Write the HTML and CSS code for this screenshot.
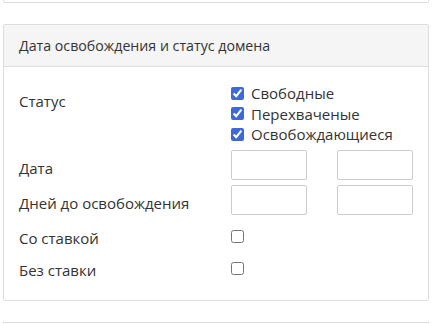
FILE: index.html
```html
<html>
    <head>
        <title>Фильтр доменов</title>
        <link rel="stylesheet" href="styles.css">
    </head>
    <body>

        <div class="page">
            <div class="panel panel-top"></div>

            <div class="panel">
                <div class="panel-heading">Дата освобождения и статус домена</div>
                <div class="panel-body">

                    <!-- Статус -->
                    <div class="form-row status-row">
                        <div class="label">Статус</div>
                        <div class="checks">
                            <label class="check"><input type="checkbox" checked> Свободные</label>
                            <label class="check"><input type="checkbox" checked> Перехваченые</label>
                            <label class="check"><input type="checkbox" checked> Освобождающиеся</label>
                        </div>
                    </div>

                    <!-- Дата -->
                    <div class="form-row">
                        <div class="label">Дата</div>
                        <div class="range">
                            <input type="text" class="field">
                            <input type="text" class="field">
                        </div>
                    </div>

                    <!-- Дней до освобождения -->
                    <div class="form-row">
                        <div class="label">Дней до освобождения</div>
                        <div class="range">
                            <input type="text" class="field">
                            <input type="text" class="field">
                        </div>
                    </div>

                    <div class="form-row flag-row">
                        <div class="label">Со ставкой</div>
                        <div><input type="checkbox" class="flag"></div>
                    </div>

                    <div class="form-row flag-row">
                        <div class="label">Без ставки</div>
                        <div><input type="checkbox" class="flag"></div>
                    </div>

                </div>
            </div>

            <div class="panel panel-bottom"></div>
        </div>

    </body>
</html>
```

FILE: styles.css
```css
/* Basic Reset */
* {
    margin: 0;
    padding: 0;
    box-sizing: border-box;
}

body {
    font-family: "Open Sans", "Noto Sans", sans-serif;
    font-size: 15px;
    line-height: 20px;
    color: #333;
    background-color: #fff;
    overflow: hidden;
}

.page {
    width: 426px;
    margin-left: 3px;
}

.panel {
    background-color: #fff;
    border: 1px solid #ddd;
    border-radius: 2px;
    margin-bottom: 21px;
}

.panel-top {
    height: 3px;
    border-top: none;
    border-radius: 0 0 2px 2px;
}

.panel-bottom {
    height: 2px;
    margin-bottom: 0;
    border-bottom: none;
}

.panel-heading {
    background-color: #f5f5f5;
    border-bottom: 1px solid #ddd;
    padding: 11px 15px 10px;
    font-size: 14.2px;
}

.panel-body {
    padding: 16px 15px 21px;
}

.form-row {
    display: grid;
    grid-template-columns: 212px 1fr;
    margin-bottom: 5px;
}

.form-row:last-child {
    margin-bottom: 0;
}

.label {
    padding-top: 8px;
}

.status-row {
    margin-bottom: 5.5px;
}

.check {
    display: flex;
    align-items: center;
    gap: 7px;
    height: 20.5px;
}

input[type="checkbox"] {
    width: 13px;
    height: 13px;
    margin: 0;
    accent-color: #3d6ad8;
}

.range {
    display: flex;
    gap: 30px;
}

.field {
    width: 76px;
    height: 30px;
    border: 1px solid #ccc;
    border-radius: 2px;
    background-color: #fff;
}

.flag-row {
    height: 27px;
}

.flag {
    margin-top: 10px !important;
}
```
